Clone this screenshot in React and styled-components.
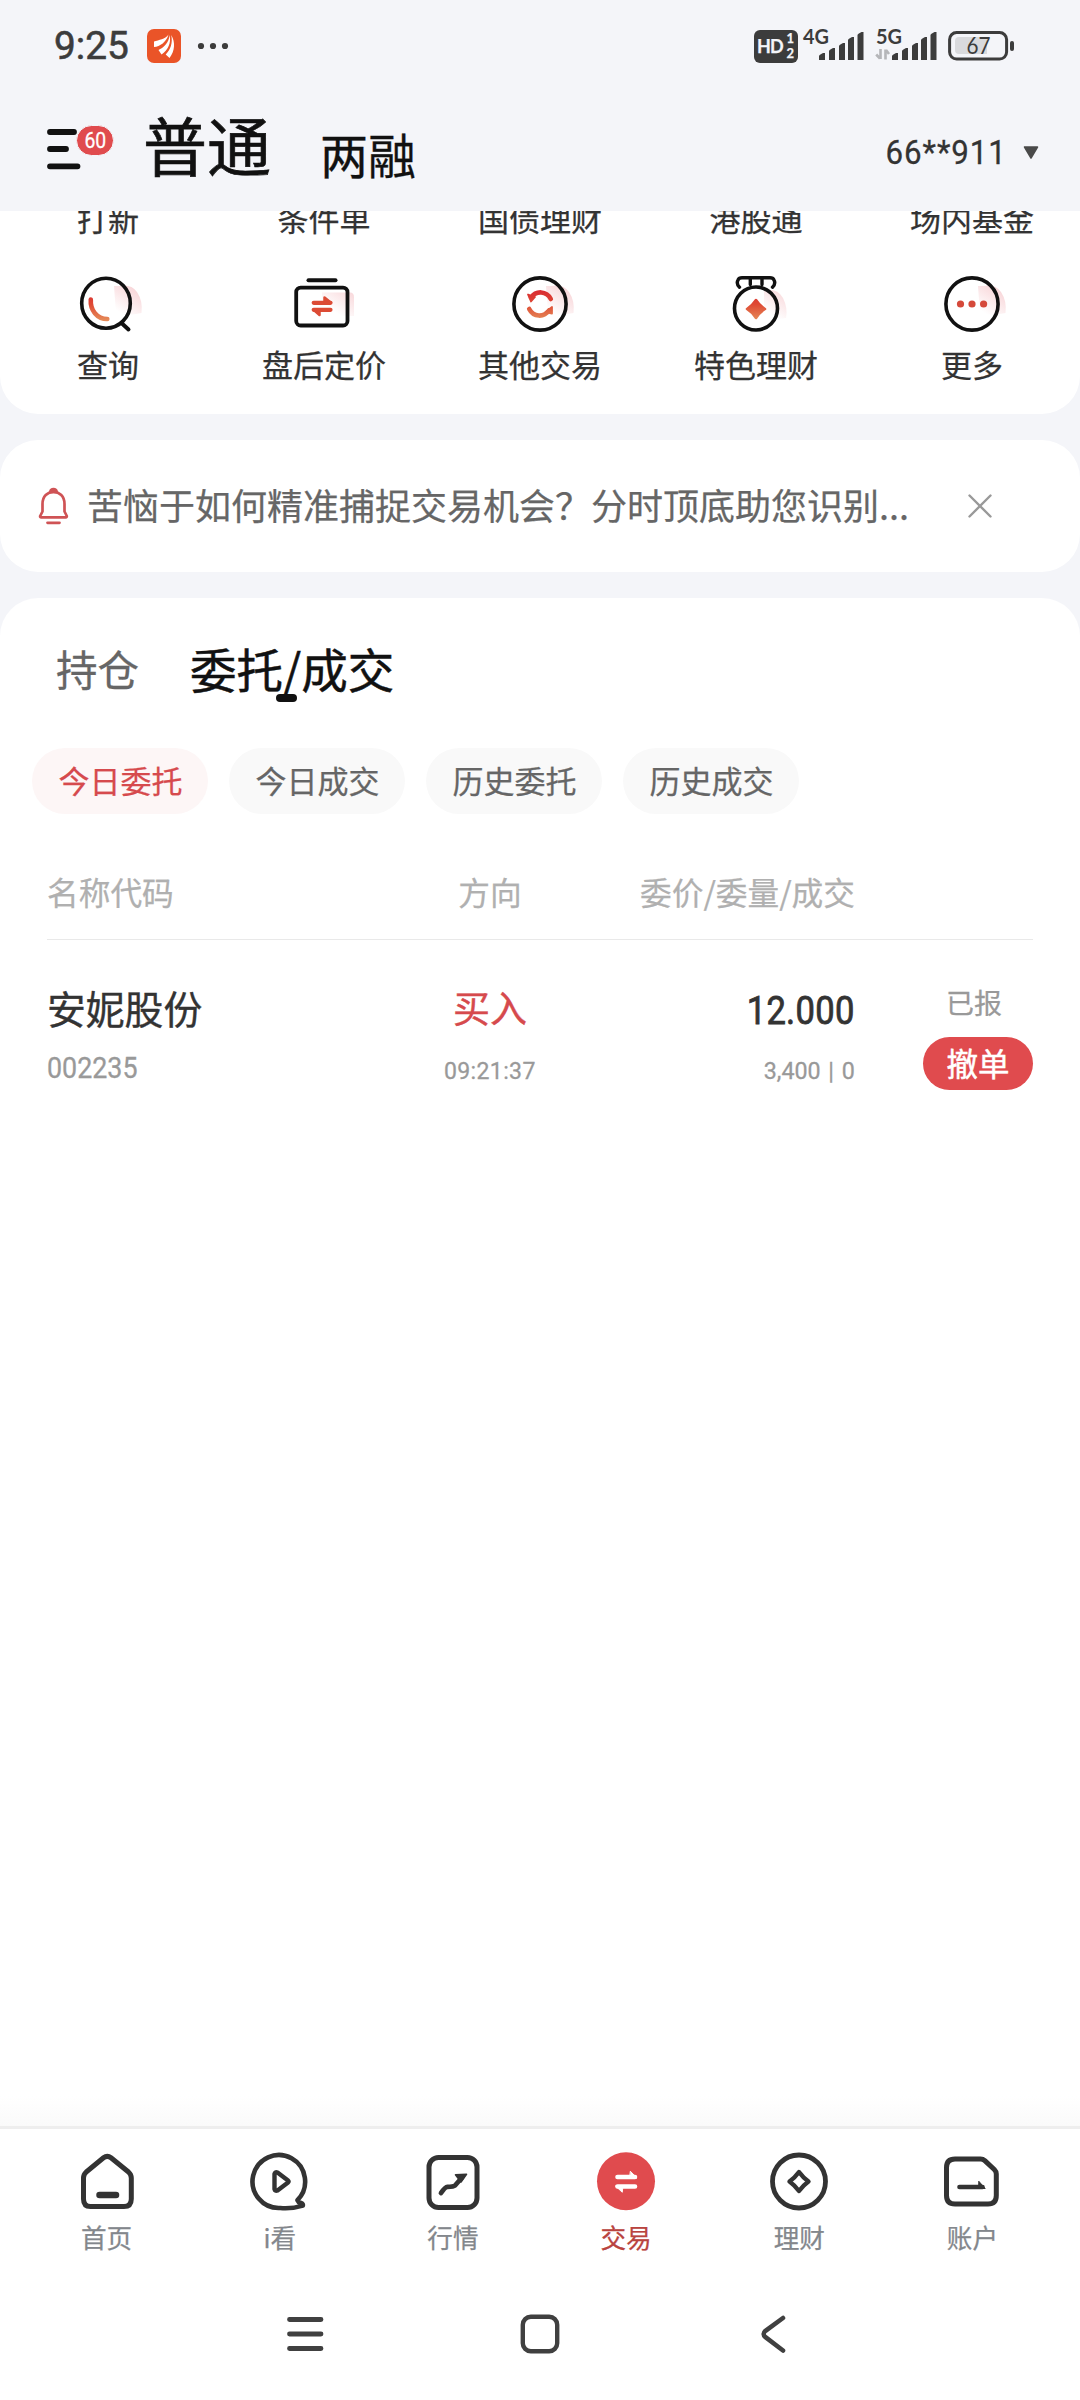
import styled, { createGlobalStyle } from "styled-components";

const GlobalStyle = createGlobalStyle`
  * {
    box-sizing: border-box;
  }

  body {
    margin: 0;
    background: #f4f5f9;
    font-family: "Noto Sans CJK SC", "Noto Sans", sans-serif;
    -webkit-text-stroke: 0.25px currentColor;
  }

  svg {
    display: block;
    flex: none;
    overflow: visible;
  }
`;

const Screen = styled.div`
  width: 1080px;
  height: 2400px;
  display: flex;
  flex-direction: column;
  overflow: hidden;
  background: #f4f5f9;
  white-space: nowrap;
`;

/* condensed digits */
const Num = styled.span`
  display: inline-block;
  font-family: Roboto, "Liberation Sans", sans-serif;
  font-size: ${({ $size }) => $size}px;
  line-height: 1;
  letter-spacing: ${({ $spacing }) => $spacing || 0}px;
  word-spacing: ${({ $word }) => $word || 0}px;
  transform: scaleX(${({ $scale }) => $scale || 1});
  transform-origin: ${({ $origin }) => $origin || "center"};
  -webkit-text-stroke: ${({ $stroke }) => $stroke || 0.3}px currentColor;
`;

/* ---------- status bar ---------- */

const StatusBar = styled.div`
  flex: none;
  height: 92px;
  padding: 0 66px 0 54px;
  display: flex;
  align-items: center;
  justify-content: space-between;
  color: #3c3c3c;
`;

const StatusLeft = styled.div`
  display: flex;
  align-items: center;

  svg {
    margin-right: 17px;
  }
`;

const Clock = styled.div`
  width: 93px;
  height: 38px;
`;

const StatusRight = styled.div`
  display: flex;
  align-items: center;
`;

const HdBadge = styled.div`
  width: 44px;
  height: 33px;
  margin-right: 4px;
  padding: 0 4px 0 3px;
  display: flex;
  align-items: center;
  justify-content: space-between;
  background: #3c3c3c;
  border-radius: 6px;
  color: #f4f5f9;
  font-family: Lato, sans-serif;
  font-size: 18px;
  font-weight: 700;
  letter-spacing: -0.8px;
  line-height: 33px;
`;

const HdDigits = styled.div`
  display: flex;
  flex-direction: column;
  font-size: 13px;
  letter-spacing: 0;
  line-height: 15px;
`;

/* ---------- header ---------- */

const Header = styled.header`
  flex: none;
  height: 119px;
  padding: 0 41px 0 47px;
  display: flex;
  align-items: flex-start;
`;

const MenuButton = styled.div`
  position: relative;
  width: 96px;
  padding-top: 37px;
`;

const Badge = styled.div`
  position: absolute;
  left: 29px;
  top: 33px;
  width: 38px;
  height: 31px;
  display: flex;
  align-items: center;
  justify-content: center;
  border: 1px solid #f4f5f9;
  border-radius: 16px;
  background: #e04b4e;
  color: #fff;
`;

const AccountTabs = styled.div`
  flex: 1;
  display: flex;
  align-items: flex-start;
  gap: 49px;
  color: #111;
`;

const AccountTab = styled.div`
  padding-top: ${({ $active }) => ($active ? 1 : 11)}px;
  font-size: ${({ $active }) => ($active ? 64 : 48)}px;
  line-height: 100px;
  -webkit-text-stroke: ${({ $active }) => ($active ? 0.7 : 0.3)}px #111;
`;

const Account = styled.div`
  padding-top: 43px;
  display: flex;
  align-items: center;
  gap: 16px;
  color: #333;
`;

/* ---------- shortcuts ---------- */

const Shortcuts = styled.section`
  flex: none;
  height: 203px;
  padding: 0 0 30px;
  overflow: hidden;
  display: flex;
  flex-direction: column;
  justify-content: flex-end;
  background: #fff;
  border-radius: 0 0 38px 38px;
`;

const ShortcutRow = styled.div`
  flex: none;
  display: grid;
  grid-template-columns: repeat(5, 216px);
`;

const Shortcut = styled.div`
  height: 146px;
  display: flex;
  flex-direction: column;
  align-items: center;
  justify-content: flex-end;
`;

const ShortcutLabel = styled.div`
  margin-top: 8px;
  font-size: 31px;
  line-height: 40px;
  color: #333;
`;

/* ---------- notice ---------- */

const Notice = styled.section`
  flex: none;
  height: 132px;
  margin-top: 26px;
  padding: 0 88px 0 38px;
  display: flex;
  align-items: center;
  background: #fff;
  border-radius: 38px;
`;

const NoticeText = styled.div`
  flex: 1;
  margin-left: 17px;
  padding-bottom: 4px;
  font-size: 36px;
  line-height: 50px;
  color: #666;
`;

/* ---------- orders ---------- */

const Orders = styled.section`
  flex: 1;
  margin-top: 26px;
  display: flex;
  flex-direction: column;
  background: linear-gradient(#fff calc(100% - 30px), #fafafa);
  border-radius: 38px 38px 0 0;
`;

const Tabs = styled.div`
  height: 150px;
  padding-left: 56px;
  display: flex;
  align-items: flex-start;
  gap: 51px;
`;

const Tab = styled.div`
  position: relative;
  padding-top: 37px;
  font-size: ${({ $active }) => ($active ? 46.5 : 41.5)}px;
  line-height: 66px;
  color: ${({ $active }) => ($active ? "#111" : "#666")};
  -webkit-text-stroke: ${({ $active }) => ($active ? 0.5 : 0.3)}px currentColor;

  &::after {
    content: "";
    display: ${({ $active }) => ($active ? "block" : "none")};
    position: absolute;
    left: 50%;
    top: 96px;
    width: 21px;
    height: 8px;
    margin-left: -16px;
    border-radius: 4px;
    background: #111;
  }
`;

const Chips = styled.div`
  padding-left: 32px;
  display: flex;
  gap: 21px;
`;

const Chip = styled.div`
  width: 176px;
  height: 66px;
  padding-left: 1px;
  border-radius: 33px;
  text-align: center;
  font-size: 31px;
  line-height: 63px;
  background: ${({ $active }) => ($active ? "#fdf6f6" : "#f9f9f9")};
  color: ${({ $active }) => ($active ? "#d64a4d" : "#666")};
`;

const Table = styled.div`
  margin: 0 47px;
`;

const columns = "366px 154px 288px 178px";

const TableHead = styled.div`
  height: 126px;
  padding-top: 54px;
  display: grid;
  grid-template-columns: ${columns};
  border-bottom: 1px solid #e9e9e9;
  font-size: 31.7px;
  line-height: 46px;
  color: #b0b0b0;
`;

const HeadCell = styled.div`
  text-align: ${({ $align }) => $align || "left"};
`;

const OrderRow = styled.div`
  padding-top: 40px;
  display: grid;
  grid-template-columns: ${columns};
`;

const Cell = styled.div`
  display: flex;
  flex-direction: column;
  align-items: ${({ $align }) => $align || "flex-start"};
  color: #333;
`;

const Main = styled.div`
  height: 74px;
  font-size: ${({ $size }) => $size || 38.8}px;
  line-height: 54px;
  color: ${({ $buy }) => ($buy ? "#d64a4d" : "#333")};
  -webkit-text-stroke: 0.4px currentColor;
`;

const Sub = styled.div`
  padding-top: ${({ $top }) => $top}px;
  line-height: 0;
  color: #999;
`;

const Status = styled.div`
  height: 57px;
  margin-right: 31px;
  font-size: 28px;
  line-height: 44px;
  color: #999;
`;

const CancelButton = styled.div`
  width: 110px;
  height: 53px;
  border-radius: 27px;
  background: #e04b4e;
  color: #fff;
  text-align: center;
  font-size: 31.5px;
  line-height: 50px;
  -webkit-text-stroke: 0.5px #fff;
`;

/* ---------- bottom bars ---------- */

const TabBar = styled.nav`
  flex: none;
  height: 151px;
  padding: 17px 21px 0 20px;
  display: grid;
  grid-template-columns: repeat(6, 1fr);
  border-top: 3px solid #eee;
  background: #fff;
`;

const TabItem = styled.div`
  display: flex;
  flex-direction: column;
  align-items: center;
  font-size: 25.6px;
  line-height: 38px;
  color: ${({ $active }) => ($active ? "#b9443f" : "#83878c")};
`;

const SystemBar = styled.div`
  flex: none;
  height: 123px;
  padding: 38px 285px 0;
  display: flex;
  justify-content: space-between;
  background: #fff;
`;

/* ---------- status icons ---------- */

const AppIcon = () => (
  <svg width="34" height="34" viewBox="0 0 34 34">
    <rect width="34" height="34" rx="7" fill="#ea5428" />
    <g fill="#fff">
      <path d="M21.5 5.5C18 10.5 12 10.8 7 12.5V18C13 17.5 19.5 13 21.5 5.5Z" />
      <path d="M22.6 6C22 14 16 19 11.5 21L14.5 25.5C21 21 24.4 14 22.6 6Z" />
      <path d="M24.2 6C26 14 23.5 20.5 18.7 25.5L22.5 29C28 22 28.5 13 24.2 6Z" />
    </g>
  </svg>
);

const Dots = () => (
  <svg width="30" height="8" viewBox="0 0 30 8" fill="#3c3c3c">
    <circle cx="3" cy="4" r="3.1" />
    <circle cx="15" cy="4" r="3.1" />
    <circle cx="27" cy="4" r="3.1" />
  </svg>
);

const bars = [
  [17, 53],
  [27, 48],
  [37, 43],
  [46, 37],
  [55.5, 32],
];

const Signal = ({ label, arrows }) => (
  <svg width="73" height="34" viewBox="0 29 73 34">
    <text
      x="1"
      y="44"
      fontFamily="Lato, sans-serif"
      fontSize="20"
      fontWeight="700"
      fill="#3c3c3c"
      textLength="26"
      lengthAdjust="spacingAndGlyphs"
    >
      {label}
    </text>
    {arrows && (
      <path
        d="M5.5 49V59M5 58.5L1.2 54.5M10.5 59.5V49.5M11 50L14 54"
        stroke="#b5b6b9"
        strokeWidth="2.6"
        fill="none"
      />
    )}
    {bars.map(([x, y]) => (
      <path
        key={x}
        d={`M${x} ${y + 3}Q${x} ${y + 2} ${x + 4} ${y}H${x + 6}V60H${x}Z`}
        fill="#3c3c3c"
      />
    ))}
  </svg>
);

const Battery = () => (
  <svg width="66" height="30" viewBox="0 0 66 30">
    <rect x="1.6" y="1.6" width="57" height="26.4" rx="7" fill="none" stroke="#3c3c3c" strokeWidth="3" />
    <path d="M11 6H39V23H11Q7 23 7 19V10Q7 6 11 6Z" fill="#d9dadd" />
    <rect x="62" y="10" width="4" height="10" rx="2" fill="#3c3c3c" />
    <text
      x="18.5"
      y="23"
      fontFamily="Lato, sans-serif"
      fontSize="23.5"
      fill="#3c3c3c"
      textLength="24"
      lengthAdjust="spacingAndGlyphs"
    >
      67
    </text>
  </svg>
);

const MenuIcon = () => (
  <svg width="35" height="40" viewBox="0 0 35 40" stroke="#111" strokeWidth="5.8" strokeLinecap="round">
    <path d="M3 3H27M3 20H19M3 37.3H30.5" />
  </svg>
);

const BellIcon = () => (
  <svg width="32" height="38" viewBox="0 0 32 38" fill="none" stroke="#cf5355" strokeWidth="2.7" strokeLinecap="round" strokeLinejoin="round">
    <path d="M4.5 17C4.5 9 9.5 5 15.5 5S26.5 9 26.5 17V24.5L28.8 29Q29 30.3 27.8 30.3H3.2Q1.8 30.3 2.2 29L4.5 24.5Z" />
    <path d="M12.3 4.8Q12.8 2.2 15.5 2.2T18.7 4.8Z" fill="#cf5355" />
    <path d="M9.5 35.8H21.5" />
  </svg>
);

const CloseIcon = () => (
  <svg width="24" height="24" viewBox="0 0 24 24" stroke="#999" strokeWidth="2.4" strokeLinecap="round">
    <path d="M1.5 1.5L22.5 22.5M22.5 1.5L1.5 22.5" />
  </svg>
);

/* ---------- shortcut icons ---------- */

const ShortcutIcon = ({ name, glow, children }) => (
  <svg width="72" height="64" viewBox="0 0 72 64" fill="none" strokeLinecap="round" strokeLinejoin="round">
    <defs>
      <linearGradient id={`${name}-fill`} gradientUnits="userSpaceOnUse" x1="36" y1="20" x2="36" y2="48">
        <stop offset="0" stopColor="#d92f32" />
        <stop offset="0.45" stopColor="#df4a34" />
        <stop offset="1" stopColor="#e58a58" />
      </linearGradient>
      <linearGradient id={`${name}-glow`} gradientUnits="userSpaceOnUse" x1="50" y1="42" x2="66" y2="18">
        <stop offset="0" stopColor="#f5c3c7" stopOpacity="0" />
        <stop offset="1" stopColor="#f5c3c7" stopOpacity="0.7" />
      </linearGradient>
    </defs>
    <path d={glow} fill={`url(#${name}-glow)`} />
    {children}
  </svg>
);

const roundGlow = "M42 14H48Q59 12 65 20Q71 29 69.5 41Q58 44 44 42Z";

const QueryIcon = () => (
  <ShortcutIcon name="query" glow={roundGlow}>
    <ellipse cx="34" cy="31.2" rx="24.3" ry="25" stroke="#111" strokeWidth="3.6" />
    <path d="M50 51.5L56.5 57.5" stroke="#111" strokeWidth="4" />
    <path d="M18.8 27.5C18 38 25 47 35.3 47" stroke="url(#query-fill)" strokeWidth="4.6" />
  </ShortcutIcon>
);

const PricingIcon = () => (
  <ShortcutIcon name="pricing" glow="M34 20.5H62Q66 20.5 66 25V44H34Z">
    <path d="M20.5 8.3H47.5" stroke="#111" strokeWidth="4" />
    <rect x="8.2" y="15.6" width="51.3" height="37.9" rx="4.5" stroke="#111" strokeWidth="3.8" />
    <path d="M25.7 30.8H42.5M25.7 37.8H42.5" stroke="#dc4b35" strokeWidth="4.2" />
    <path d="M36.5 25.5L43 30.8H36.5ZM31.5 43L25.5 37.8H31.5Z" fill="#dc4b35" stroke="#dc4b35" strokeWidth="2.5" />
  </ShortcutIcon>
);

const OtherIcon = () => (
  <ShortcutIcon name="other" glow={roundGlow}>
    <circle cx="36" cy="32" r="26.1" stroke="#111" strokeWidth="3.6" />
    <path d="M27 25.5C32 18.5 42.5 18.5 46.8 27M25.2 37C29.5 45.5 40 45.5 45 38.5" stroke="url(#other-fill)" strokeWidth="4.6" />
    <path d="M24 22.5L31 25L27 29.5ZM48 35L48 41.5L41.5 40Z" fill="url(#other-fill)" stroke="url(#other-fill)" strokeWidth="1.8" />
  </ShortcutIcon>
);

const WealthIcon = () => (
  <ShortcutIcon name="wealth" glow="M44 18Q58 16 63 26Q68 36 66 46Q56 48 44 46Z">
    <circle cx="36" cy="36.5" r="21.5" stroke="#111" strokeWidth="3.6" />
    <path d="M19.5 15.2Q16 12 18 8Q19 5.8 22 5.8H50Q53 5.8 54 8Q56 12 52.5 15.2M30.3 6V12.5M42 6V12.5" stroke="#111" strokeWidth="3.4" />
    <path d="M36 28Q39.5 33.5 45 37Q39.5 40.5 36 46Q32.5 40.5 27 37Q32.5 33.5 36 28Z" fill="url(#wealth-fill)" stroke="url(#wealth-fill)" strokeWidth="2.6" />
  </ShortcutIcon>
);

const MoreIcon = () => (
  <ShortcutIcon name="more" glow={roundGlow}>
    <circle cx="36" cy="32" r="26.1" stroke="#111" strokeWidth="3.6" />
    <g fill="#d5493a">
      <circle cx="24.5" cy="32" r="3.6" />
      <circle cx="36" cy="32" r="3.6" />
      <circle cx="47.6" cy="32" r="3.6" />
    </g>
  </ShortcutIcon>
);

/* ---------- tab bar icons ---------- */

const NavIcon = ({ children }) => (
  <svg width="72" height="72" viewBox="0 0 72 72" fill="none" stroke="#333" strokeWidth="5" strokeLinecap="round" strokeLinejoin="round">
    {children}
  </svg>
);

const HomeIcon = () => (
  <NavIcon>
    <path d="M32.5 11.8Q36.3 8.8 40 11.8L57.5 26Q60.3 28.5 60.3 32V53Q60.3 60.5 53 60.5H19.5Q12.5 60.5 12.5 53V32Q12.5 28.5 15.2 26Z" />
    <path d="M28.5 49H45" strokeWidth="6.5" />
  </NavIcon>
);

const WatchIcon = () => (
  <NavIcon>
    <path d="M53.5 54.2A26.3 26.5 0 1 0 36.2 62Q48 63 58.8 59.6Q59.5 57 55 56.5Z" strokeWidth="4.6" />
    <path d="M30.5 28V43Q31 45.5 33.5 44.5L44 36.5Q45 35.5 44 34.5L33.5 26.5Q31 25.5 30.5 28Z" strokeWidth="4.4" />
  </NavIcon>
);

const MarketIcon = () => (
  <NavIcon>
    <rect x="12" y="11.5" width="48" height="50" rx="9.5" />
    <path d="M24 47Q28 41 30.5 40.8Q36.5 40.8 38 39.5L45 31.5" strokeWidth="4.8" />
    <path d="M38.5 28.8L49.5 28.2L44 36Z" fill="#333" strokeWidth="1.6" />
  </NavIcon>
);

const TradeIcon = () => (
  <NavIcon>
    <circle cx="36" cy="35.3" r="29" fill="#e04b4e" stroke="none" />
    <path d="M27.5 31H45M27.5 40.5H45" stroke="#fff" strokeWidth="4.6" />
    <path d="M40.6 25.5L47 32H40ZM32 46L25.5 40H32.5Z" fill="#fff" stroke="#fff" strokeWidth="1" />
  </NavIcon>
);

const FinanceIcon = () => (
  <NavIcon>
    <circle cx="36" cy="35.5" r="26.5" strokeWidth="4.8" />
    <path d="M36 26Q40 31.5 45.5 35.5Q40 39.5 36 45Q32 39.5 26.5 35.5Q32 31.5 36 26Z" strokeWidth="4.4" />
  </NavIcon>
);

const UserIcon = () => (
  <NavIcon>
    <path d="M19 13H44.5Q47 13 48.8 14.6L58.3 23.5Q60.3 25.5 60.3 28V49.5Q60.3 58 52 58H19Q10.5 58 10.5 49.5V21.5Q10.5 13 19 13Z" />
    <path d="M23.5 41H46.5" strokeWidth="4.6" />
    <path d="M43 35.5L49.2 42.5H43Z" fill="#333" strokeWidth="1" />
  </NavIcon>
);

const prevRow = ["打新", "条件单", "国债理财", "港股通", "场内基金"];

const shortcuts = [
  { label: "查询", Icon: QueryIcon },
  { label: "盘后定价", Icon: PricingIcon },
  { label: "其他交易", Icon: OtherIcon },
  { label: "特色理财", Icon: WealthIcon },
  { label: "更多", Icon: MoreIcon },
];

const filters = ["今日委托", "今日成交", "历史委托", "历史成交"];

const navItems = [
  { label: "首页", Icon: HomeIcon },
  { label: "i看", Icon: WatchIcon },
  { label: "行情", Icon: MarketIcon },
  { label: "交易", Icon: TradeIcon, active: true },
  { label: "理财", Icon: FinanceIcon },
  { label: "账户", Icon: UserIcon },
];

const App = () => {
  return (
    <Screen>
      <GlobalStyle />

      <StatusBar>
        <StatusLeft>
          <Clock>
            <Num $size={38} $scale={1.02} $stroke={0.6} $origin="left">
              9:25
            </Num>
          </Clock>
          <AppIcon />
          <Dots />
        </StatusLeft>
        <StatusRight>
          <HdBadge>
            HD
            <HdDigits>
              <span>1</span>
              <span>2</span>
            </HdDigits>
          </HdBadge>
          <Signal label="4G" />
          <Signal label="5G" arrows />
          <Battery />
        </StatusRight>
      </StatusBar>

      <Header>
        <MenuButton>
          <MenuIcon />
          <Badge>
            <Num $size={22} $scale={0.88}>
              60
            </Num>
          </Badge>
        </MenuButton>
        <AccountTabs>
          <AccountTab $active>普通</AccountTab>
          <AccountTab>两融</AccountTab>
        </AccountTabs>
        <Account>
          <Num $size={34} $spacing={1} $scale={0.92} $origin="right">
            66**911
          </Num>
          <svg width="16" height="13" viewBox="0 0 16 13">
            <path d="M1.5 1H14.5L8 12Z" fill="#4a4a4a" stroke="#4a4a4a" strokeWidth="1.5" strokeLinejoin="round" />
          </svg>
        </Account>
      </Header>

      <Shortcuts>
        <ShortcutRow>
          {prevRow.map((label) => (
            <Shortcut key={label}>
              <ShortcutLabel>{label}</ShortcutLabel>
            </Shortcut>
          ))}
        </ShortcutRow>
        <ShortcutRow>
          {shortcuts.map(({ label, Icon }) => (
            <Shortcut key={label}>
              <Icon />
              <ShortcutLabel>{label}</ShortcutLabel>
            </Shortcut>
          ))}
        </ShortcutRow>
      </Shortcuts>

      <Notice>
        <BellIcon />
        <NoticeText>苦恼于如何精准捕捉交易机会？分时顶底助您识别...</NoticeText>
        <CloseIcon />
      </Notice>

      <Orders>
        <Tabs>
          <Tab>持仓</Tab>
          <Tab $active>委托/成交</Tab>
        </Tabs>
        <Chips>
          {filters.map((label, i) => (
            <Chip key={label} $active={i === 0}>
              {label}
            </Chip>
          ))}
        </Chips>
        <Table>
          <TableHead>
            <HeadCell>名称代码</HeadCell>
            <HeadCell $align="center">方向</HeadCell>
            <HeadCell $align="right">委价/委量/成交</HeadCell>
          </TableHead>
          <OrderRow>
            <Cell>
              <Main>安妮股份</Main>
              <Sub $top={0}>
                <Num $size={29.5} $scale={0.91} $origin="left">
                  002235
                </Num>
              </Sub>
            </Cell>
            <Cell $align="center">
              <Main $size={37} $buy>
                买入
              </Main>
              <Sub $top={5}>
                <Num $size={24.5} $scale={0.94} $spacing={0.4}>
                  09:21:37
                </Num>
              </Sub>
            </Cell>
            <Cell $align="flex-end">
              <Main>
                <Num $size={38} $scale={0.91} $spacing={0.3} $stroke={0.8} $origin="right">
                  12.000
                </Num>
              </Main>
              <Sub $top={5}>
                <Num $size={24.5} $scale={0.95} $word={2} $origin="right">
                  3,400 | 0
                </Num>
              </Sub>
            </Cell>
            <Cell $align="flex-end">
              <Status>已报</Status>
              <CancelButton>撤单</CancelButton>
            </Cell>
          </OrderRow>
        </Table>
      </Orders>

      <TabBar>
        {navItems.map(({ label, Icon, active }) => (
          <TabItem key={label} $active={active}>
            <Icon />
            {label}
          </TabItem>
        ))}
      </TabBar>

      <SystemBar>
        <svg width="40" height="40" viewBox="0 0 40 40" stroke="#404040" strokeWidth="4.8" strokeLinecap="round">
          <path d="M4.5 4.5H36M4.5 19H36M4.5 33.5H36" />
        </svg>
        <svg width="40" height="40" viewBox="0 0 40 40" fill="none" stroke="#404040" strokeWidth="4.4">
          <rect x="2.8" y="1.8" width="34.4" height="34.4" rx="8" />
        </svg>
        <svg width="40" height="40" viewBox="0 0 40 40" fill="none" stroke="#404040" strokeWidth="4.6" strokeLinecap="round">
          <path d="M28 3L10.5 15.8Q6.8 19 10.5 22.2L28 35.5" />
        </svg>
      </SystemBar>
    </Screen>
  );
};

export default App;
